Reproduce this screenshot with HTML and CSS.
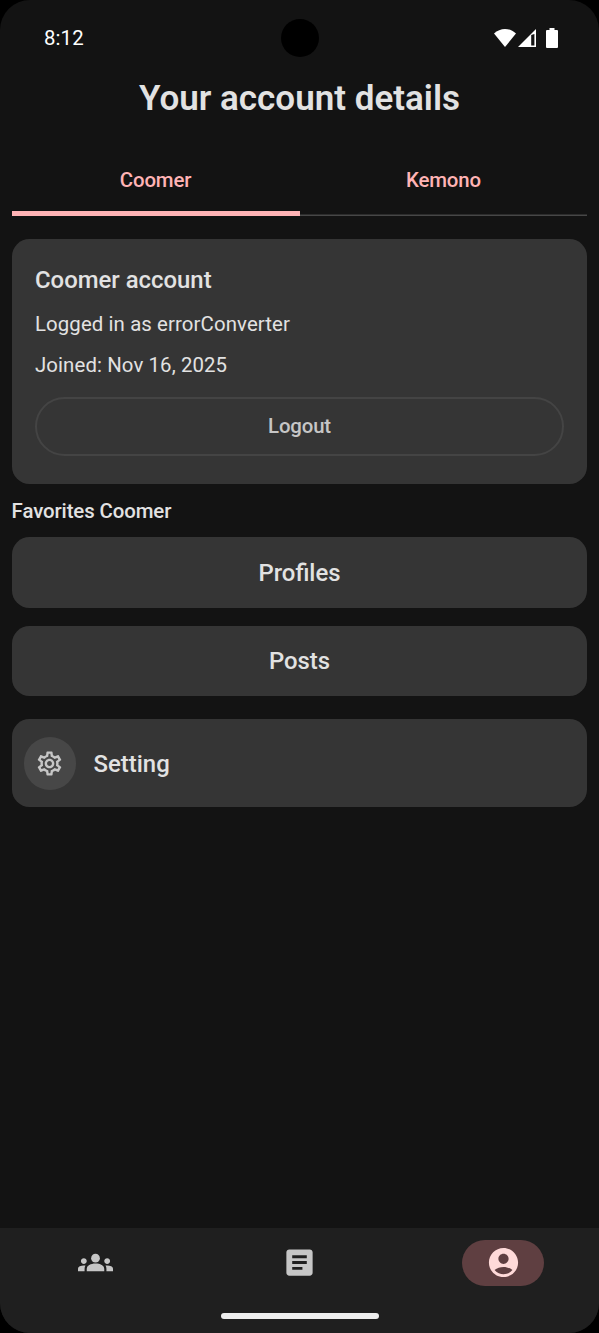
FILE: index.html
```
<!DOCTYPE html>
<html lang="en">

<head>
  <meta charset="UTF-8">
  <title>Your account details</title>
  <link rel="stylesheet" href="styles.css">
</head>

<body>
  <div class="screen">
    <header class="status-bar">
      <span class="time">8:12</span>
      <span class="camera"></span>
      <div class="status-icons">
        <svg class="wifi" viewBox="0 0 22 18">
          <path d="M11 18L0 4.6C3.2 1.6 7 0 11 0s7.800 1.600 11 4.600z" />
        </svg>
        <svg class="signal" viewBox="0 0 18 18">
          <path fill-rule="evenodd" d="M18 0v18H0zM13.200 6v10.500h3.200V5z" />
        </svg>
        <svg class="battery" viewBox="0 0 12 20">
          <path d="M3.500 0h5v2H11a1 1 0 0 1 1 1v16a1 1 0 0 1-1 1H1a1 1 0 0 1-1-1V3a1 1 0 0 1 1-1h2.500z" />
        </svg>
      </div>
    </header>

    <main class="content">
      <h1>Your account details</h1>

      <div class="tabs">
        <button class="tab active">Coomer</button>
        <button class="tab">Kemono</button>
      </div>

      <section class="card account">
        <h2>Coomer account</h2>
        <p>Logged in as errorConverter</p>
        <p>Joined: Nov 16, 2025</p>
        <button class="logout-btn">Logout</button>
      </section>

      <h3>Favorites Coomer</h3>
      <div class="favorites">
        <button class="card link-card">Profiles</button>
        <button class="card link-card">Posts</button>
      </div>

      <button class="card setting">
        <span class="setting-icon">
          <svg viewBox="0 0 24 24">
            <path d="M19.430 12.980c.04-.32.07-.64.07-.98 0-.34-.03-.66-.07-.98l2.110-1.650c.19-.15.24-.42.12-.64l-2-3.460c-.09-.16-.26-.25-.44-.25-.06 0-.12.01-.17.03l-2.490 1c-.52-.4-1.080-.73-1.690-.98l-.38-2.650C14.460 2.180 14.250 2 14 2h-4c-.25 0-.46.18-.49.42l-.38 2.650c-.61.25-1.170.59-1.690.98l-2.490-1c-.06-.02-.12-.03-.18-.03-.17 0-.34.09-.43.25l-2 3.460c-.13.22-.07.49.12.64l2.110 1.650c-.04.32-.07.65-.07.98 0 .33.03.66.07.98l-2.110 1.650c-.19.15-.24.42-.12.64l2 3.460c.09.16.26.25.44.25.06 0 .12-.01.17-.03l2.490-1c.52.4 1.080.73 1.690.98l.38 2.650c.03.24.24.42.49.42h4c.25 0 .46-.18.49-.42l.38-2.650c.61-.25 1.170-.59 1.690-.98l2.490 1c.06.02.12.03.18.03.17 0 .34-.09.43-.25l2-3.460c.12-.22.07-.49-.12-.64l-2.110-1.650zm-1.980-1.710c.04.31.05.52.05.73 0 .21-.02.43-.05.73l-.14 1.130.89.7 1.080.84-.7 1.210-1.270-.51-1.040-.42-.9.68c-.43.32-.84.56-1.250.73l-1.060.43-.16 1.130-.2 1.350h-1.400l-.19-1.350-.16-1.130-1.060-.43c-.43-.18-.83-.41-1.230-.71l-.91-.7-1.060.43-1.270.51-.7-1.210 1.080-.84.89-.7-.14-1.130c-.03-.31-.05-.54-.05-.74s.02-.43.05-.73l.14-1.130-.89-.7-1.080-.84.7-1.210 1.270.51 1.040.42.9-.68c.43-.32.84-.56 1.250-.73l1.060-.43.16-1.130.2-1.350h1.390l.19 1.350.16 1.130 1.060.43c.43.18.83.41 1.230.71l.91.7 1.060-.43 1.270-.51.7 1.210-1.070.85-.89.7.14 1.130zM12 8c-2.210 0-4 1.790-4 4s1.790 4 4 4 4-1.790 4-4-1.790-4-4-4zm0 6c-1.100 0-2-.9-2-2s.9-2 2-2 2 .9 2 2-.9 2-2 2z" />
          </svg>
        </span>
        <span class="setting-label">Setting</span>
      </button>
    </main>

    <footer class="bottom">
      <nav class="bottom-nav">
        <a class="nav-item">
          <svg viewBox="0 0 24 24">
            <circle cx="12" cy="9" r="3" />
            <path d="M4 13c1.100 0 2-.9 2-2s-.9-2-2-2-2 .9-2 2 .9 2 2 2zm1.130 1.100c-.37-.06-.74-.1-1.130-.1-.99 0-1.930.21-2.780.58C.48 14.900 0 15.620 0 16.430V18h4.500v-1.610c0-.83.23-1.610.63-2.290zM20 13c1.100 0 2-.9 2-2s-.9-2-2-2-2 .9-2 2 .9 2 2 2zm4 3.430c0-.81-.48-1.530-1.220-1.850-.85-.37-1.790-.58-2.780-.58-.39 0-.76.04-1.130.1.4.68.63 1.460.63 2.290V18H24v-1.570zm-7.760-2.780c-1.170-.52-2.610-.9-4.240-.9s-3.070.39-4.240.9C6.680 14.130 6 15.210 6 16.390V18h12v-1.610c0-1.180-.68-2.260-1.760-2.740z" />
          </svg>
        </a>
        <a class="nav-item">
          <svg viewBox="0 0 24 24">
            <path d="M19 3H5c-1.100 0-2 .9-2 2v14c0 1.100.9 2 2 2h14c1.100 0 2-.9 2-2V5c0-1.100-.9-2-2-2zm-5 14H7v-2h7v2zm3-4H7v-2h10v2zm0-4H7V7h10v2z" />
          </svg>
        </a>
        <a class="nav-item selected">
          <svg viewBox="0 0 24 24">
            <path d="M12 2C6.480 2 2 6.480 2 12s4.480 10 10 10 10-4.480 10-10S17.520 2 12 2zm0 4c1.930 0 3.500 1.570 3.500 3.500S13.930 13 12 13s-3.500-1.570-3.500-3.500S10.070 6 12 6zm0 14c-2.030 0-4.430-.82-6.140-2.880C7.550 15.800 9.680 15 12 15s4.450.8 6.140 2.120C16.430 19.180 14.030 20 12 20z" />
          </svg>
        </a>
      </nav>
      <div class="home-bar"></div>
    </footer>
  </div>
</body>

</html>
```
FILE: styles.css
```
* {
  margin: 0;
  padding: 0;
  box-sizing: border-box;
}

:root {
  --background: #131313;
  --card: #353535;
  --nav: #1f1f1f;
  --outline: #474747;
  --text: #e2e2e2;
  --text-muted: #c6c6c6;
  --primary: #ffb3b5;
}

body {
  font-family: Roboto, sans-serif;
  font-size: 20.4px;
  background-color: #000;
  color: var(--text);
}

button {
  font: inherit;
  color: inherit;
  background: none;
  border: none;
  cursor: pointer;
}

svg {
  display: block;
  fill: currentColor;
}

.screen {
  display: flex;
  flex-direction: column;
  height: 1333px;
  border-radius: 30px;
  overflow: hidden;
  background-color: var(--background);
}

/* Status bar */
.status-bar {
  display: grid;
  grid-template-columns: 1fr 38px 1fr;
  align-items: center;
  height: 76px;
  padding: 0 41px;
  color: #fff;
}

.time {
  padding-left: 3px;
  letter-spacing: 0.1px;
}

.camera {
  width: 38px;
  height: 38px;
  border-radius: 50%;
  background-color: #000;
}

.status-icons {
  display: flex;
  justify-content: flex-end;
  align-items: center;
}

.wifi {
  width: 22px;
  height: 18px;
}

.signal {
  width: 18px;
  height: 18px;
  margin: 0 10px 0 2px;
}

.battery {
  width: 12px;
  height: 20px;
}

/* Content */
.content {
  flex: 1;
  padding: 0 11.6px;
}

h1 {
  height: 70px;
  line-height: 46px;
  font-size: 35px;
  font-weight: 600;
  text-align: center;
}

.tabs {
  display: flex;
  height: 69.5px;
  margin-bottom: 23.5px;
  box-shadow: inset 0 -1.5px var(--outline);
}

.tab {
  flex: 1;
  padding-bottom: 2px;
  font-weight: 500;
  letter-spacing: -0.15px;
  color: var(--primary);
}

.tab.active {
  border-bottom: 5px solid var(--primary);
  padding-top: 6px;
}

.card {
  width: 100%;
  border-radius: 17.5px;
  background-color: var(--card);
}

.account {
  height: 245.4px;
  padding: 23.4px;
}

h2 {
  font-size: 23.9px;
  font-weight: 500;
  line-height: 36px;
}

.account p {
  margin-top: 12px;
  line-height: 29px;
  letter-spacing: 0.1px;
}

.logout-btn {
  width: 100%;
  height: 59px;
  margin-top: 16.600px;
  padding-bottom: 1px;
  border: 2px solid #444;
  border-radius: 30px;
  font-weight: 500;
  letter-spacing: -0.15px;
  color: var(--text-muted);
}

h3 {
  font-size: 20.4px;
  font-weight: 500;
  line-height: 29px;
  letter-spacing: -0.1px;
  margin: 12.6px 0 11.4px;
}

.favorites {
  display: flex;
  flex-direction: column;
  gap: 18px;
  margin-bottom: 23.5px;
}

.link-card {
  height: 70.3px;
  font-size: 23.9px;
  font-weight: 500;
}

.setting {
  display: flex;
  align-items: center;
  gap: 17.5px;
  height: 88px;
  padding: 0 12px;
  font-size: 23.9px;
  font-weight: 500;
}

.setting-icon {
  display: flex;
  align-items: center;
  justify-content: center;
  width: 52.5px;
  height: 52.5px;
  border-radius: 50%;
  background-color: var(--outline);
  color: var(--text-muted);
}

.setting-icon svg {
  width: 29px;
  height: 29px;
}

.setting-label {
  padding-top: 1px;
}

/* Bottom navigation */
.bottom {
  height: 105px;
  padding-top: 12px;
  background-color: var(--nav);
}

.bottom-nav {
  display: grid;
  grid-template-columns: repeat(3, 1fr);
  gap: 12px;
  justify-items: center;
}

.nav-item {
  display: flex;
  align-items: center;
  justify-content: center;
  width: 82px;
  height: 46px;
  padding-bottom: 1px;
  border-radius: 23px;
  color: var(--text-muted);
}

.nav-item.selected {
  background-color: #5f3f41;
  color: #ffdad9;
}

.nav-item svg {
  width: 35px;
  height: 35px;
}

.home-bar {
  width: 158px;
  height: 6px;
  margin: 27px auto 0;
  border-radius: 3px;
  background-color: #eee;
}
```
